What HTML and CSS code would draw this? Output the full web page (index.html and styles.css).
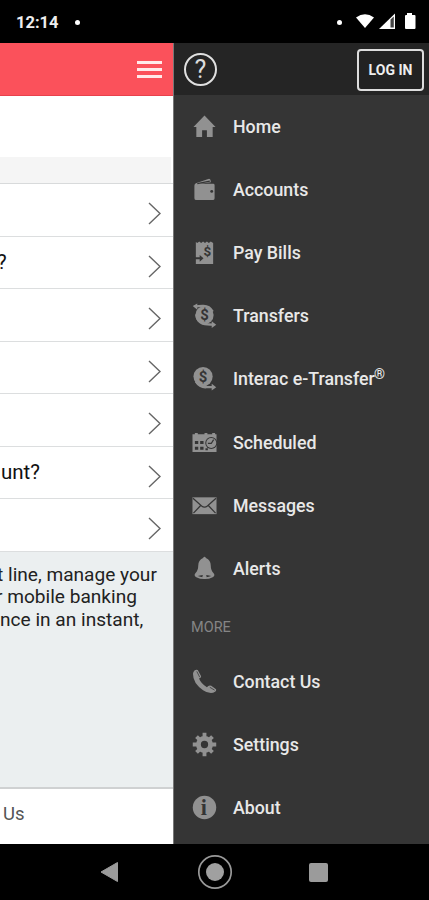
FILE: index.html
```html
<!DOCTYPE html>
<html lang="en">
<head>
  <meta charset="UTF-8" />
  <meta name="viewport" content="width=device-width, initial-scale=1" />
  <title>Mobile Banking</title>
  <link rel="stylesheet" href="styles.css">
</head>
<body>
  <div class="status-bar">
    <span class="clock">12:14</span>
    <span class="dot"></span>
    <span class="dot dot-right"></span>
    <svg class="status-icons" width="62" height="20" viewBox="0 0 62 20">
      <path d="M0 5.500Q9 -1 18 5.500L9 16Z" fill="#fff"/>
      <path d="M23 17L39 1.500V17Z" fill="#fff"/>
      <path d="M34.500 7.500L37.800 4.500V15.500H34.500Z" fill="#444"/>
      <path d="M51 1h5v2h2.500q1 0 1 1v12q0 1-1 1h-8.500q-1 0-1-1V4q0-1 1-1h1z" fill="#fff"/>
    </svg>
  </div>

  <div class="screen">
    <main class="page">
      <header class="page-header">
        <div class="hamburger"><i></i><i></i><i></i></div>
      </header>
      <div class="blank"></div>
      <div class="band"></div>
      <ul class="links">
        <li><span></span><svg class="chevron" viewBox="0 0 13 23"><path d="M1 1L12 11.500L1 22"/></svg></li>
        <li><span class="q1">?</span><svg class="chevron" viewBox="0 0 13 23"><path d="M1 1L12 11.500L1 22"/></svg></li>
        <li><span></span><svg class="chevron" viewBox="0 0 13 23"><path d="M1 1L12 11.500L1 22"/></svg></li>
        <li><span></span><svg class="chevron" viewBox="0 0 13 23"><path d="M1 1L12 11.500L1 22"/></svg></li>
        <li><span></span><svg class="chevron" viewBox="0 0 13 23"><path d="M1 1L12 11.500L1 22"/></svg></li>
        <li><span class="q2">unt?</span><svg class="chevron" viewBox="0 0 13 23"><path d="M1 1L12 11.500L1 22"/></svg></li>
        <li><span></span><svg class="chevron" viewBox="0 0 13 23"><path d="M1 1L12 11.500L1 22"/></svg></li>
      </ul>
      <div class="blurb">
        <p class="line1">t line, manage your</p>
        <p class="line2">r mobile banking</p>
        <p class="line3">nce in an instant,</p>
      </div>
      <footer class="page-footer">Us</footer>
    </main>

    <aside class="drawer">
      <div class="drawer-header">
        <span class="help">?</span>
        <button class="login">LOG IN</button>
      </div>
      <ul class="menu">
        <li>
          <svg class="icon" viewBox="0 0 26 26"><path d="M13 1.500L24.500 13.500H21.500V24H15.500V17H10.500V24H4.500V13.500H1.500Z"/></svg>
          <span>Home</span>
        </li>
        <li>
          <svg class="icon" viewBox="0 0 26 26"><path d="M4 6.500L17 2Q19 1.500 19.300 3.500L19.600 5.500L8 7H22Q23.500 7 23.500 8.500V22Q23.500 24 21.500 24H4.500Q2.500 24 2.500 22V9Q2.500 7.200 4 6.500Z"/><path class="thin" d="M5.500 7L18.500 4.300"/><circle class="cut" cx="20.500" cy="15" r="1.500"/></svg>
          <span>Accounts</span>
        </li>
        <li>
          <svg class="icon" viewBox="0 0 26 26"><path d="M4 2L5.500 3L7.500 1.500L9.500 3L11.500 1.500L13.500 3L15.500 1.500L17.500 3L19.500 1.500L22 3V25H4V20H8V22.500L12 19L8 15.500V18H4Z"/><text x="12" y="17" font-size="14">$</text></svg>
          <span>Pay Bills</span>
        </li>
        <li>
          <svg class="icon" viewBox="0 0 26 26"><circle cx="13" cy="12.500" r="9.500"/><path class="stroke" d="M21.500 9Q18 2.500 11 3L3 3.500M4.500 12Q5 19 11 21.500Q15 22.500 23 22.500"/><path d="M.8 3L5.500 .5V7ZM25.200 22.500L20.500 19V26Z"/><text x="8.600" y="18" font-size="15.500">$</text></svg>
          <span>Transfers</span>
        </li>
        <li>
          <svg class="icon" viewBox="0 0 26 26"><circle cx="11.500" cy="11" r="10"/><path class="stroke" d="M4 16Q8 22.500 15 22H23"/><path d="M25.200 22L20.500 18.500V25.500Z"/><text x="7" y="16.500" font-size="15.500">$</text></svg>
          <span>Interac e-Transfer<sup>®</sup></span>
        </li>
        <li>
          <svg class="icon" viewBox="0 0 26 26"><path d="M.5 4.500H3V3H6V4.500H13V3H16V4.500H21V3H24V4.500H25.500V23H.5Z"/><path class="cut" d="M3 11.500H6.500V14.500H3ZM8.500 11.500H12V14.500H8.500ZM3 17.500H6.500V20.500H3ZM8.500 17.500H12V20.500H8.500ZM14 19H16.500V21H14Z"/><circle class="cut" cx="20" cy="13.500" r="6.200"/><circle cx="20" cy="13.500" r="5.200"/><path class="thin" d="M22.500 10L20 14H16.500"/></svg>
          <span>Scheduled</span>
        </li>
        <li>
          <svg class="icon" viewBox="0 0 26 26"><path d="M.5 4.500H25.500V22H.5Z"/><path class="thin" d="M1 5.500L10 13.500Q13 16 16 13.500L25 5.500M1.500 21L9 13M24.500 21L17 13"/></svg>
          <span>Messages</span>
        </li>
        <li>
          <svg class="icon" viewBox="0 0 26 26"><path d="M11.500 2Q13 -.5 14.500 2Q19.500 4 19.500 10Q19.500 15 22.500 18Q24.500 20.500 21.500 22Q18 24 13 24T4.500 22Q1.500 20.500 3.500 18Q6.500 15 6.500 10Q6.500 4 11.500 2Z"/><path class="cut" d="M6 20.800Q13 18.500 20 20.800Q13 23.500 6 20.800Z"/><circle cx="13" cy="21.500" r="2.200"/></svg>
          <span>Alerts</span>
        </li>
      </ul>
      <div class="section">MORE</div>
      <ul class="menu">
        <li>
          <svg class="icon" viewBox="0 0 26 26"><path d="M1.500 3Q3 0 6 1L9.500 7.500Q9.500 9.300 7.300 10Q9.500 15.500 15.500 19Q17.500 16.500 20 17.500L25 21Q25.500 23 24 23.700Q19 27 11.500 22Q1 15 1 5Z"/><path class="thin phone" d="M5 2.500L8 8.500M18.500 19L23.500 22"/></svg>
          <span>Contact Us</span>
        </li>
        <li>
          <svg class="icon" viewBox="0 0 26 26"><circle class="gear" cx="13" cy="13" r="6.300"/><path class="teeth" d="M13 .8V6M13 20V25.200M.8 13H6M20 13H25.200M4.700 4.700L8 8M18 18L21.300 21.300M21.300 4.700L18 8M8 18L4.700 21.300"/></svg>
          <span>Settings</span>
        </li>
        <li>
          <svg class="icon" viewBox="0 0 26 26"><circle cx="13" cy="13" r="12.200"/><text class="info" x="9.200" y="20.500" font-size="23">i</text></svg>
          <span>About</span>
        </li>
      </ul>
    </aside>
  </div>

  <div class="nav-bar">
    <svg width="19" height="22" viewBox="0 0 19 22"><path d="M1 11L17.500 1.500V20.500Z" fill="#9b9b9b" stroke="#9b9b9b" stroke-linejoin="round"/></svg>
    <svg class="nav-home" width="36" height="36" viewBox="0 0 36 36"><circle cx="18" cy="18" r="16.200" fill="none" stroke="#999" stroke-width="1.700"/><circle cx="18" cy="18" r="9" fill="#a0a0a0"/></svg>
    <span class="nav-square"></span>
  </div>
</body>
</html>
```

FILE: styles.css
```css
* {
  box-sizing: border-box;
}
body {
  margin: 0;
  width: 429px;
  height: 900px;
  display: flex;
  flex-direction: column;
  overflow: hidden;
  background: #000;
  font-family: Roboto, "Liberation Sans", sans-serif;
}
ul, p {
  margin: 0;
  padding: 0;
  list-style: none;
}

/* status bar */
.status-bar {
  height: 43px;
  display: flex;
  align-items: center;
  padding: 1px 14px 0 16px;
}
.clock {
  width: 43px;
  color: #eee;
  font-size: 16.500px;
  font-weight: 700;
}
.dot {
  width: 5px;
  height: 5px;
  margin-left: 16px;
  border-radius: 50%;
  background: #fff;
}
.dot-right {
  margin-left: auto;
  margin-right: 14px;
}
.status-icons {
  margin-right: -3px;
}

.screen {
  height: 801px;
  display: flex;
}

/* page pushed to the left */
.page {
  width: 174px;
  display: flex;
  flex-direction: column;
  overflow: hidden;
  background: #fff;
  border-right: 1px solid #777;
}
.page-header {
  height: 53px;
  display: flex;
  justify-content: flex-end;
  padding: 18px 11px 0 0;
  background: #fb515b;
  border-bottom: 1px solid #e8414c;
}
.hamburger {
  width: 25px;
  display: flex;
  flex-direction: column;
  gap: 4px;
}
.hamburger i {
  height: 3px;
  background: #ffeaea;
}
.blank {
  height: 61px;
}
.band {
  height: 26px;
  margin-right: 2px;
  background: #f5f5f5;
}
.links {
  border-top: 1px solid #d8dadb;
}
.links li {
  height: 52.500px;
  display: flex;
  justify-content: space-between;
  align-items: center;
  padding-right: 12px;
  border-bottom: 1px solid #dcdedf;
  color: #111;
  font-size: 20.500px;
}
.q1 {
  margin-left: -3px;
}
.q2 {
  margin-left: 1px;
}
.chevron {
  width: 13px;
  height: 23px;
  margin-top: 8px;
  fill: none;
  stroke: #666;
  stroke-width: 1.400;
}
.blurb {
  flex: 1;
  padding-top: 12px;
  background: #ebeff0;
  color: #222;
  font-size: 19.100px;
  line-height: 22.700px;
  white-space: nowrap;
}
.line1 {
  margin-left: -3px;
}
.line2 {
  margin-left: -4px;
}
.page-footer {
  height: 57px;
  padding: 14px 0 0 3px;
  border-top: 2px solid #cfd1d2;
  color: #555;
  font-size: 18.500px;
}

/* drawer */
.drawer {
  flex: 1;
  background: #353535;
}
.drawer-header {
  height: 52px;
  display: flex;
  justify-content: space-between;
  align-items: center;
  padding: 1px 5px 0 10px;
  background: #252525;
}
.help {
  width: 33px;
  height: 33px;
  display: flex;
  align-items: center;
  justify-content: center;
  border: 2px solid #e0e0e0;
  border-radius: 50%;
  color: #ddd;
  font-size: 25px;
}
.login {
  width: 67px;
  height: 42px;
  padding: 0;
  background: #222;
  border: 2px solid #ddd;
  border-radius: 4px;
  color: #eee;
  font: 700 14px Roboto, "Liberation Sans", sans-serif;
}
.menu li {
  height: 63.100px;
  display: flex;
  align-items: center;
  gap: 16px;
  padding-left: 18px;
  color: #e8e8e8;
  font-size: 17.800px;
  font-weight: 500;
}
.menu sup {
  margin-left: -1px;
  font-size: 14px;
  line-height: 0;
  vertical-align: 6px;
}
.section {
  height: 50px;
  padding: 19px 0 0 17px;
  color: #858585;
  font-size: 14.500px;
}

.icon {
  width: 25px;
  height: 25px;
  fill: #919191;
}
.icon text {
  fill: #353535;
  font-family: Roboto, sans-serif;
  font-weight: 700;
}
.icon .info {
  font-family: "Liberation Serif", serif;
}
.icon .cut {
  fill: #353535;
}
.icon .stroke {
  fill: none;
  stroke: #919191;
  stroke-width: 2.500;
}
.icon .thin {
  fill: none;
  stroke: #353535;
  stroke-width: 1.300;
}
.icon .phone {
  stroke-width: .8;
}
.icon .gear {
  fill: none;
  stroke: #919191;
  stroke-width: 5;
}
.icon .teeth {
  fill: none;
  stroke: #919191;
  stroke-width: 4;
}

/* system navigation */
.nav-bar {
  height: 56px;
  display: flex;
  align-items: center;
  padding-left: 100px;
}
.nav-home {
  margin-left: 78px;
}
.nav-square {
  width: 19px;
  height: 19px;
  margin-left: 76px;
  border-radius: 2px;
  background: #9b9b9b;
}
```
